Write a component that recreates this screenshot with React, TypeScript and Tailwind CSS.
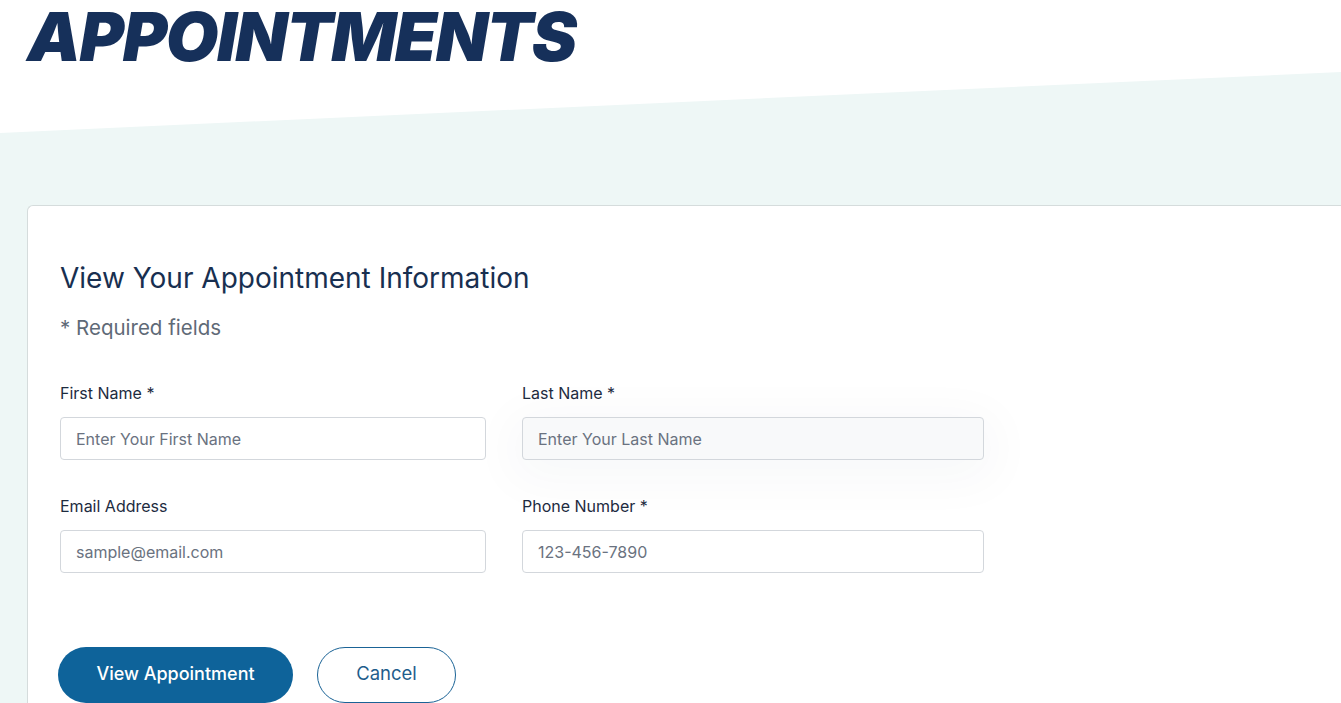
const fieldLabel = "block text-[16px] leading-5 text-[#1d2b3f] mb-[14px]";
const inputBase =
  "block h-[43px] rounded-[4px] border border-[#d3d7dc] px-[15px] text-[16px] text-[#1d2b3f] placeholder:text-[#6a7280] outline-none";

function Field({
  label,
  placeholder,
  width,
  extra = "",
}: {
  label: string;
  placeholder: string;
  width: string;
  extra?: string;
}) {
  return (
    <div>
      <label className={fieldLabel}>{label}</label>
      <input className={`${inputBase} ${width} ${extra}`} placeholder={placeholder} />
    </div>
  );
}

export default function App() {
  return (
    <div className="h-[703px] overflow-hidden bg-white font-['Inter','Liberation_Sans',sans-serif]">
      <div className="pl-[27px]">
        <h1 className="text-[68px] leading-[72px] font-black italic tracking-[-1.5px] text-[#16305a] font-['Inter','Liberation_Sans',sans-serif]">
          APPOINTMENTS
        </h1>
      </div>
      <div className="bg-[#eef7f6] [clip-path:polygon(0_61px,100%_0,100%_100%,0_100%)] pt-[133px] pl-[27px] h-[720px]">
        <div className="bg-white border border-[#d5dcdc] border-r-0 rounded-tl-[6px] h-full pt-[54px] pl-[32px]">
          <h2 className="text-[28px] leading-[36px] text-[#182f50]">View Your Appointment Information</h2>
          <p className="mt-[18px] text-[20.5px] leading-[28px] text-[#5f6a77]">* Required fields</p>

          <div className="mt-[41px] flex gap-[36px]">
            <Field label="First Name *" placeholder="Enter Your First Name" width="w-[426px]" />
            <Field
              label="Last Name *"
              placeholder="Enter Your Last Name"
              width="w-[462px]"
              extra="bg-[#f8f9fa] shadow-[0_10px_50px_10px_rgba(30,50,80,0.035)]"
            />
          </div>
          <div className="mt-[36px] flex gap-[36px]">
            <Field label="Email Address" placeholder="sample@email.com" width="w-[426px]" />
            <Field label="Phone Number *" placeholder="123-456-7890" width="w-[462px]" />
          </div>

          <div className="mt-[74px] -ml-[2px] flex gap-[24px]">
            <button className="h-[56px] w-[235px] rounded-full bg-[#0e639a] pb-[3px] text-white text-[18px] font-medium">
              View Appointment
            </button>
            <button className="h-[56px] w-[139px] rounded-full border border-[#1a6396] pb-[3px] text-[#1f5d8c] text-[18.5px]">
              Cancel
            </button>
          </div>
        </div>
      </div>
    </div>
  );
}
